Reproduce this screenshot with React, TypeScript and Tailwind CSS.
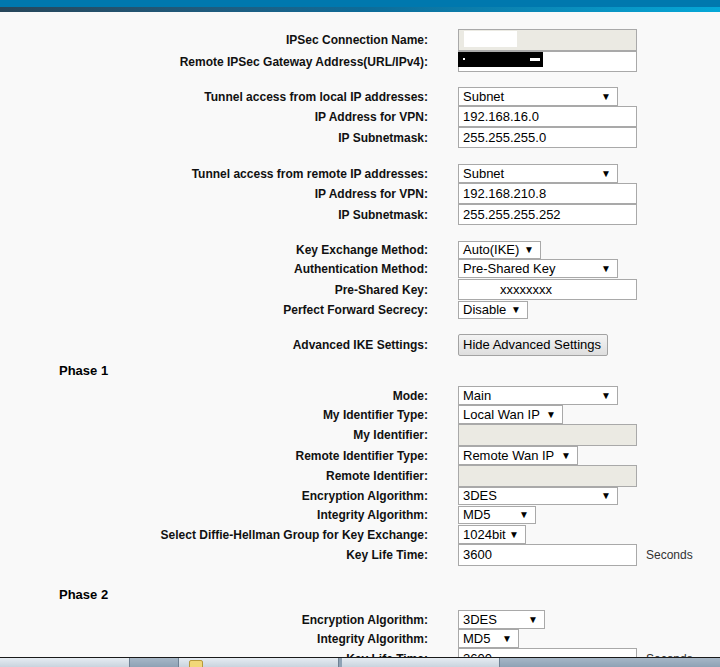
import React from "react";

const font = { fontFamily: '"Liberation Sans", Arial, sans-serif' };

type RowProps = { label?: string; className: string; children?: React.ReactNode };

function Row({ label, className, children }: RowProps) {
  return (
    <div className={"flex items-center " + className}>
      <div className="w-[428px] shrink-0 text-right text-[12px] font-bold text-[#111] whitespace-nowrap">{label}</div>
      <div className="ml-[30px] flex h-full items-center">{children}</div>
    </div>
  );
}

function Select({ value, width }: { value: string; width: string }) {
  return (
    <div className={"flex h-full items-center justify-between border border-[#a9a9a9] bg-white pl-[4px] pr-[6px] text-[13px] text-black " + width}>
      <span className="whitespace-nowrap">{value}</span>
      <span className="text-[10px] leading-none">▼</span>
    </div>
  );
}

function Input({ value, disabled, className }: { value?: string; disabled?: boolean; className?: string }) {
  return (
    <div
      className={
        "flex h-full w-[179px] items-center border border-[#a9a9a9] pl-[4px] text-[13px] text-black " +
        (disabled ? "bg-[#ebeae3] " : "bg-white ") +
        (className ?? "")
      }
    >
      {value}
    </div>
  );
}

function Heading({ text, className }: { text: string; className: string }) {
  return <div className={"pl-[59px] text-[13px] font-bold text-black flex items-center " + className}>{text}</div>;
}

export default function App() {
  return (
    <div className="h-[667px] w-[720px] overflow-hidden bg-[#f9f9f9]" style={font}>
      <div className="h-[7px] bg-[#0078ae]" />
      <div className="h-[5px] bg-gradient-to-r from-[#27465a] via-[#0d6b98] to-[#05a8d8]" />

      <div>
        <Row label="IPSec Connection Name:" className="mt-[17px] h-[22px]">
          <div className="relative h-full">
            <Input disabled />
            <div className="absolute left-[6px] top-[2px] h-[16px] w-[53px] bg-white" />
          </div>
        </Row>
        <Row label="Remote IPSec Gateway Address(URL/IPv4):" className="h-[21px]">
          <div className="relative h-full">
            <Input />
            <div className="absolute left-0 top-[1px] h-[15px] w-[85px] bg-black">
              <div className="absolute left-[5px] top-[6px] h-[2px] w-[2px] bg-white" />
              <div className="absolute left-[72px] top-[6px] h-[3px] w-[10px] bg-white" />
            </div>
          </div>
        </Row>

        <Row label="Tunnel access from local IP addresses:" className="mt-[15px] h-[19px]">
          <Select value="Subnet" width="w-[160px]" />
        </Row>
        <Row label="IP Address for VPN:" className="h-[21px]">
          <Input value="192.168.16.0" />
        </Row>
        <Row label="IP Subnetmask:" className="h-[21px]">
          <Input value="255.255.255.0" />
        </Row>

        <Row label="Tunnel access from remote IP addresses:" className="mt-[16px] h-[19px]">
          <Select value="Subnet" width="w-[160px]" />
        </Row>
        <Row label="IP Address for VPN:" className="h-[21px]">
          <Input value="192.168.210.8" />
        </Row>
        <Row label="IP Subnetmask:" className="h-[21px]">
          <Input value="255.255.255.252" />
        </Row>

        <Row label="Key Exchange Method:" className="mt-[16px] h-[18px]">
          <Select value="Auto(IKE)" width="w-[83px]" />
        </Row>
        <Row label="Authentication Method:" className="h-[19px]">
          <Select value="Pre-Shared Key" width="w-[160px]" />
        </Row>
        <Row label="Pre-Shared Key:" className="mt-px h-[21px]">
          <Input value="xxxxxxxx" className="pl-[41px]" />
        </Row>
        <Row label="Perfect Forward Secrecy:" className="mt-px h-[18px]">
          <Select value="Disable" width="w-[70px]" />
        </Row>

        <Row label="Advanced IKE Settings:" className="mt-[15px] h-[22px]">
          <button className="h-full w-[150px] rounded-[2px] border border-[#a3a3a3] bg-gradient-to-b from-[#f4f4f4] to-[#dedede] pl-[4px] text-left text-[13px] text-black">
            Hide Advanced Settings
          </button>
        </Row>

        <Heading text="Phase 1" className="mt-[6px] h-[18px]" />
        <Row label="Mode:" className="mt-[6px] h-[19px]">
          <Select value="Main" width="w-[160px]" />
        </Row>
        <Row label="My Identifier Type:" className="h-[19px]">
          <Select value="Local Wan IP" width="w-[105px]" />
        </Row>
        <Row label="My Identifier:" className="h-[22px]">
          <Input disabled />
        </Row>
        <Row label="Remote Identifier Type:" className="h-[19px]">
          <Select value="Remote Wan IP" width="w-[120px]" />
        </Row>
        <Row label="Remote Identifier:" className="h-[22px]">
          <Input disabled />
        </Row>
        <Row label="Encryption Algorithm:" className="h-[18px]">
          <Select value="3DES" width="w-[160px]" />
        </Row>
        <Row label="Integrity Algorithm:" className="mt-px h-[18px]">
          <Select value="MD5" width="w-[78px]" />
        </Row>
        <Row label="Select Diffie-Hellman Group for Key Exchange:" className="mt-px h-[19px]">
          <Select value="1024bit" width="w-[68px]" />
        </Row>
        <Row label="Key Life Time:" className="h-[22px]">
          <Input value="3600" />
          <span className="ml-[9px] text-[12px] text-[#333]">Seconds</span>
        </Row>

        <Heading text="Phase 2" className="mt-[20px] h-[18px]" />
        <Row label="Encryption Algorithm:" className="mt-[6px] h-[19px]">
          <Select value="3DES" width="w-[87px]" />
        </Row>
        <Row label="Integrity Algorithm:" className="h-[19px]">
          <Select value="MD5" width="w-[61px]" />
        </Row>
        <Row label="Key Life Time:" className="h-[22px]">
          <Input value="3600" />
          <span className="ml-[9px] text-[12px] text-[#333]">Seconds</span>
        </Row>
      </div>

      {/* taskbar strip overlapping the bottom of the page */}
      <div className="fixed bottom-0 left-0 flex h-[10px] w-[720px] border-t border-[#1a1a1a]">
        <div className="w-[130px] border-r border-[#6f8193] bg-gradient-to-b from-[#e6ecf2] to-[#c9d4de]" />
        <div className="w-[49px] border-r border-[#6f8193] bg-gradient-to-b from-[#a7b7c7] to-[#8ea2b5]" />
        <div className="relative w-[160px] border-r border-[#6f8193] bg-gradient-to-b from-[#e6ecf2] to-[#c9d4de]">
          <div className="absolute left-[10px] top-[2px] h-[8px] w-[14px] rounded-t-[2px] border border-[#b89a3c] bg-[#f2d878]" />
        </div>
        <div className="w-[3px] bg-[#8ea2b5]" />
        <div className="w-[158px] border-r border-[#6f8193] bg-gradient-to-b from-[#e6ecf2] to-[#c9d4de]" />
        <div className="flex-1 bg-gradient-to-b from-[#a7b7c7] to-[#8ea2b5]" />
      </div>
    </div>
  );
}
